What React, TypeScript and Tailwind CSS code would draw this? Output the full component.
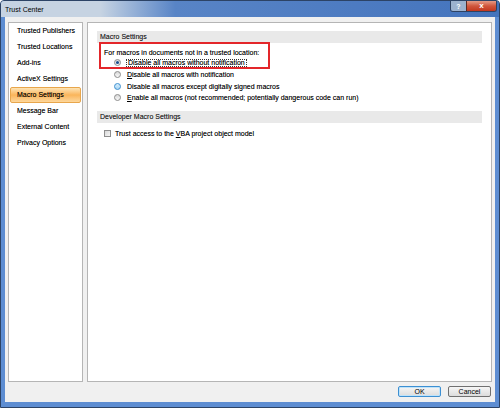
import React from "react";

const CATEGORIES = [
  "Trusted Publishers",
  "Trusted Locations",
  "Add-ins",
  "ActiveX Settings",
  "Macro Settings",
  "Message Bar",
  "External Content",
  "Privacy Options",
];

function Radio({ checked, hover }: { checked?: boolean; hover?: boolean }) {
  return (
    <span
      className={`flex h-[7px] w-[7px] shrink-0 items-center justify-center rounded-full border ${
        hover
          ? "border-[#3c8fd0] bg-gradient-to-b from-[#d6eefc] to-[#a9d6f4]"
          : "border-[#8d8d8d] bg-gradient-to-b from-[#d9d9d9] to-[#f8f8f8]"
      }`}
    >
      {checked && <span className="h-[3px] w-[3px] rounded-full bg-[#1c4f8e]" />}
    </span>
  );
}

function SectionHeader({ title }: { title: string }) {
  return (
    <div className="mx-[9px] flex h-[12px] items-center bg-[#e9e9e9] pl-[3px] text-[#1e1e1e]">
      {title}
    </div>
  );
}

export default function App() {
  return (
    <div className="flex h-[408px] w-[500px] flex-col overflow-hidden rounded-t-[4px] border border-[#2c4366] bg-[#5d8dd2] font-['Liberation_Sans',Arial,sans-serif] text-[7px] text-black">
      {/* Title bar */}
      <div className="flex h-[16px] shrink-0 items-start justify-between bg-gradient-to-r from-[#c6d3e2] from-20% via-[#5884c6] via-35% to-[#4474bd] pl-[4px] pr-[2px]">
        <span className="mt-[4px] leading-[9px] text-black">Trust Center</span>
        <div className="flex h-[11px] items-stretch overflow-hidden rounded-b-[3px] border border-t-0 border-[#2e4262]">
          <div className="flex w-[15px] items-center justify-center bg-[#9cb2cf] text-[7px] font-bold leading-none text-white">
            ?
          </div>
          <div className="flex w-[30px] items-center justify-center border-l border-[#5a2a24] bg-gradient-to-b from-[#e49a86] via-[#d0553c] to-[#c2361d] text-[8px] font-bold leading-none text-white">
            x
          </div>
        </div>
      </div>

      {/* Client area */}
      <div className="mx-[4px] flex flex-1 flex-col bg-[#f0f0f0] [text-shadow:0_0_0.4px_rgba(0,0,0,0.45)]">
        <div className="flex flex-1 gap-[4px] px-[3px] pt-[5px]">
          {/* Category list */}
          <div className="w-[75px] border border-[#b5b5b5] bg-white">
            {CATEGORIES.map((c) =>
              c === "Macro Settings" ? (
                <div
                  key={c}
                  className="mx-[1px] flex h-[16px] items-center rounded-[2px] border border-[#e8a64c] bg-gradient-to-b from-[#fde4b4] via-[#fab55a] to-[#fdd79b] pl-[6px]"
                >
                  {c}
                </div>
              ) : (
                <div key={c} className="mx-[1px] flex h-[16px] items-center pl-[7px]">
                  {c}
                </div>
              )
            )}
          </div>

          {/* Settings */}
          <div className="flex-1 border border-[#b5b5b5] bg-white pt-[8px]">
            <SectionHeader title="Macro Settings" />
            <div className="relative pt-[5px]">
              <div className="pointer-events-none absolute left-[11px] top-[-1px] h-[27px] w-[171px] border-2 border-[#e3262a]" />
              <div className="ml-[16px] flex h-[9px] items-center leading-none">
                For macros in documents not in a trusted location:
              </div>
              <div className="ml-[26px] flex flex-col">
                <div className="flex h-[11.7px] items-center gap-[5px]">
                  <Radio checked />
                  <span className="flex h-[8px] items-center border border-dotted border-[#333] px-[1px] leading-none">
                    Disable all macros without notification
                  </span>
                </div>
                <div className="flex h-[11.7px] items-center gap-[6px]">
                  <Radio />
                  <span className="leading-none">
                    <span className="underline">D</span>isable all macros with notification
                  </span>
                </div>
                <div className="flex h-[11.7px] items-center gap-[6px]">
                  <Radio hover />
                  <span className="leading-none">Disable all macros except digitally signed macros</span>
                </div>
                <div className="flex h-[11.7px] items-center gap-[6px]">
                  <Radio />
                  <span className="leading-none">
                    <span className="underline">E</span>nable all macros (not recommended; potentially
                    dangerous code can run)
                  </span>
                </div>
              </div>
            </div>

            <div className="pt-[7px]">
              <SectionHeader title="Developer Macro Settings" />
            </div>
            <div className="ml-[16px] mt-[7px] flex items-center gap-[4px]">
              <span className="h-[7px] w-[7px] border border-[#8e8e8e] bg-gradient-to-br from-[#d8d8d8] to-[#f6f6f6]" />
              <span className="leading-none">
                Trust access to the <span className="underline">V</span>BA project object model
              </span>
            </div>
          </div>
        </div>

        {/* Buttons */}
        <div className="flex justify-end gap-[7px] pb-[5px] pr-[4px] pt-[4px]">
          <button className="flex h-[11px] w-[43px] items-center justify-center rounded-[2px] border border-[#3c8fd2] bg-gradient-to-b from-[#f6f6f6] to-[#dcdcdc] leading-none shadow-[inset_0_0_0_1px_#bfe3fa]">
            OK
          </button>
          <button className="flex h-[11px] w-[43px] items-center justify-center rounded-[2px] border border-[#707070] bg-gradient-to-b from-[#f6f6f6] to-[#dcdcdc] leading-none">
            Cancel
          </button>
        </div>
      </div>

      {/* Bottom frame */}
      <div className="h-[5px] shrink-0" />
    </div>
  );
}
